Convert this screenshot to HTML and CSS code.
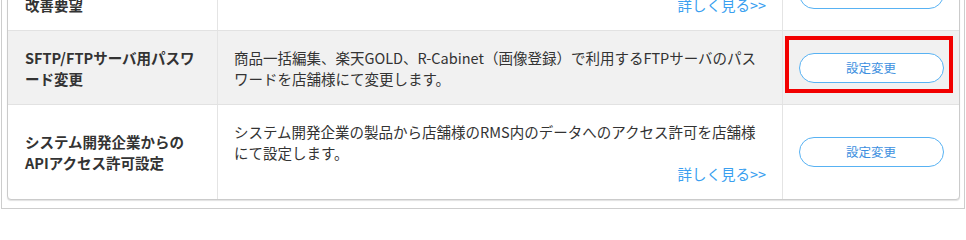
FILE: index.html
```html
<!DOCTYPE html>
<html lang="ja">
<head>
<meta charset="utf-8">
<title>設定一覧</title>
<link rel="stylesheet" href="styles.css">
</head>
<body>
<div class="frame">
  <div class="settings">
    <div class="row">
      <div class="cell cell-name">機能に関する<br>改善要望</div>
      <div class="cell cell-desc">
        <p class="desc">RMSの機能に関するご意見・改善要望をお送りください。</p>
        <p class="more"><a href="#">詳しく見る&gt;&gt;</a></p>
      </div>
      <div class="cell cell-action"><button class="btn">設定変更</button></div>
    </div>
    <div class="row row-alt">
      <div class="cell cell-name">SFTP/FTPサーバ用パスワード変更</div>
      <div class="cell cell-desc">
        <p class="desc">商品一括編集、楽天GOLD、R-Cabinet（画像登録）で利用するFTPサーバのパスワードを店舗様にて変更します。</p>
      </div>
      <div class="cell cell-action">
        <button class="btn">設定変更</button>
        <span class="highlight"></span>
      </div>
    </div>
    <div class="row">
      <div class="cell cell-name">システム開発企業からのAPIアクセス許可設定</div>
      <div class="cell cell-desc">
        <p class="desc">システム開発企業の製品から店舗様のRMS内のデータへのアクセス許可を店舗様にて設定します。</p>
        <p class="more"><a href="#">詳しく見る&gt;&gt;</a></p>
      </div>
      <div class="cell cell-action"><button class="btn">設定変更</button></div>
    </div>
  </div>
</div>
</body>
</html>
```

FILE: styles.css
```css
html, body {
  margin: 0;
  padding: 0;
  background: #ffffff;
}

body {
  font-family: "Noto Sans CJK JP", "Noto Sans", sans-serif;
  color: #333333;
}

.frame {
  box-sizing: border-box;
  width: 964px;
  height: 209px;
  margin-left: 1px;
  padding: 0 4px 0 5px;
  border: 1px solid #cdcdcd;
  border-top: none;
  overflow: hidden;
}

.settings {
  margin-top: -44px;
  border: 1px solid #cbcbcb;
  border-radius: 4px;
  box-shadow: 0 1px 1px rgba(0, 0, 0, 0.12);
  background: #ffffff;
}

.row {
  display: grid;
  grid-template-columns: 210px 565px 176px;
  border-bottom: 1px solid #e2e2e2;
}

.row:last-child {
  border-bottom: none;
}

.row-alt {
  background: #f1f1f1;
}

.cell {
  box-sizing: border-box;
  border-right: 1px solid #e4e4e4;
}

.cell:last-child {
  border-right: none;
}

.cell-name {
  display: flex;
  flex-direction: column;
  justify-content: center;
  padding: 0 16px 0 17px;
  font-size: 14.5px;
  font-weight: bold;
  line-height: 21px;
  color: #333333;
}

.cell-desc {
  padding: 16px 16px 15px 16px;
  font-size: 14.5px;
  line-height: 21px;
}

.desc {
  margin: 0;
}

.more {
  margin: 0;
  text-align: right;
}

.more a {
  color: #3a9ff0;
  text-decoration: none;
}

.cell-action {
  position: relative;
  display: flex;
  align-items: center;
  justify-content: center;
}

.btn {
  box-sizing: border-box;
  width: 145px;
  height: 30px;
  padding: 0;
  border: 1px solid #58b2f3;
  border-radius: 15px;
  background: #ffffff;
  color: #3c8fe0;
  font-family: "Noto Sans CJK JP", "Noto Sans", sans-serif;
  font-size: 12.5px;
  line-height: 28px;
  cursor: pointer;
}

.highlight {
  position: absolute;
  left: 2px;
  top: 5px;
  box-sizing: border-box;
  width: 168px;
  height: 57px;
  border: 4px solid #f20000;
  pointer-events: none;
}
```
